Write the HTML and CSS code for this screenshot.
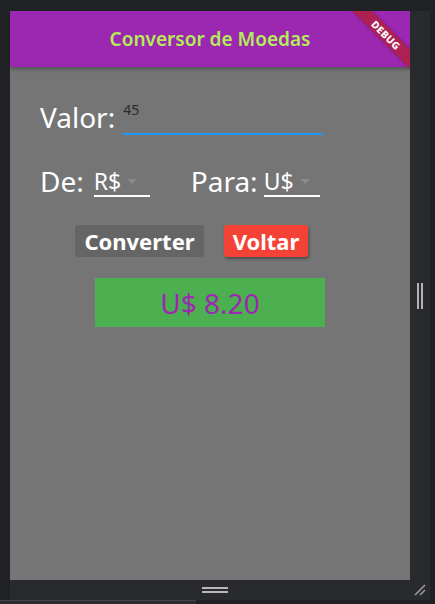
FILE: index.html
```html
<!DOCTYPE html>
<html>
<head>
<meta charset="utf-8">
<link rel="stylesheet" href="styles.css">
</head>
<body>
<div class="screen">
  <div class="main">
    <div class="app">
      <header class="appbar">Conversor de Moedas</header>
      <div class="content">
        <div class="row-valor">
          <span class="label label-valor">Valor:</span>
          <div class="field"><span class="field-text">45</span></div>
        </div>
        <div class="row-moedas">
          <span class="label">De:</span>
          <div class="dropdown dd-de"><span>R$</span><span class="arrow"></span></div>
          <span class="label label-para">Para:</span>
          <div class="dropdown dd-para"><span>U$</span><span class="arrow"></span></div>
        </div>
        <div class="row-buttons">
          <button class="btn btn-convert">Converter</button>
          <button class="btn btn-back">Voltar</button>
        </div>
        <div class="result">U$ 8.20</div>
      </div>
      <div class="debug">DEBUG</div>
    </div>
    <div class="side">
      <span class="vbar"></span><span class="vbar"></span>
    </div>
  </div>
  <div class="bottom">
    <div class="hbars"><span class="hbar"></span><span class="hbar"></span></div>
    <svg class="grip" width="14" height="14" viewBox="0 0 14 14">
      <line x1="2" y1="12" x2="12" y2="2" stroke="#9a9b9e" stroke-width="1.6"/>
      <line x1="7" y1="12" x2="12" y2="7" stroke="#9a9b9e" stroke-width="1.6"/>
    </svg>
  </div>
  <div class="footer"></div>
</div>
</body>
</html>
```
FILE: styles.css
```css
* { box-sizing: border-box; }
html, body {
  margin: 0;
  padding: 0;
  width: 435px;
  height: 604px;
  overflow: hidden;
  background: #202124;
  font-family: "Noto Sans", "Open Sans", sans-serif;
}
.screen {
  display: flex;
  flex-direction: column;
  padding-top: 11px;
  height: 604px;
}
.main {
  display: flex;
  height: 569px;
  padding-left: 10px;
}
.app {
  position: relative;
  width: 400px;
  height: 569px;
  background: #757575;
  overflow: hidden;
  display: flex;
  flex-direction: column;
}
.appbar {
  height: 56px;
  flex: none;
  background: #9c27b0;
  color: #b4ec57;
  font-size: 19px;
  font-weight: 600;
  display: flex;
  align-items: center;
  justify-content: center;
  box-shadow: 0 2px 4px rgba(0,0,0,0.3);
  position: relative;
  z-index: 1;
}
.content {
  padding: 32px 30px 0 30px;
  display: flex;
  flex-direction: column;
}
.label {
  color: #fff;
  font-size: 28px;
  line-height: 32px;
}
.label-valor {
  margin-bottom: 2px;
}
.row-valor {
  display: flex;
  align-items: flex-end;
  height: 36px;
}
.field {
  margin-left: 8px;
  width: 200px;
  height: 32px;
  border-bottom: 2px solid #2196f3;
  position: relative;
}
.field-text {
  position: absolute;
  left: 0;
  top: -3px;
  font-size: 14px;
  color: #2a2a2a;
}
.row-moedas {
  display: flex;
  align-items: flex-end;
  margin-top: 28px;
  height: 34px;
}
.dropdown {
  margin-left: 10px;
  width: 56px;
  height: 31px;
  border-bottom: 2px solid #fff;
  display: flex;
  align-items: center;
  color: #fff;
  font-size: 23px;
  line-height: 28px;
  padding-left: 0;
}
.arrow {
  margin-left: 6px;
  margin-top: 2px;
  width: 0;
  height: 0;
  border-left: 5px solid transparent;
  border-right: 5px solid transparent;
  border-top: 5px solid #8a8a8a;
}
.label-para {
  margin-left: 41px;
}
.dd-para {
  margin-left: 6px;
}
.row-buttons {
  display: flex;
  justify-content: flex-start;
  gap: 20px;
  margin-top: 28px;
  margin-left: 35px;
}
.btn {
  border: none;
  border-radius: 3px;
  height: 32px;
  padding: 0;
  color: #fff;
  font-family: "Noto Sans", "Open Sans", sans-serif;
  font-size: 22px;
  font-weight: 700;
  line-height: 32px;
}
.btn-convert {
  background: #656565;
  width: 129px;
}
.btn-back {
  background: #f44336;
  width: 84px;
  box-shadow: 1px 2px 3px rgba(0,0,0,0.35);
}
.result {
  margin: 21px auto 0 auto;
  width: 230px;
  height: 49px;
  background: #4caf50;
  color: #9c27b0;
  font-size: 28px;
  display: flex;
  align-items: center;
  justify-content: center;
}
.debug {
  position: absolute;
  left: 326px;
  top: 17px;
  width: 100px;
  height: 14px;
  transform: rotate(45deg);
  background: rgba(183, 28, 28, 0.63);
  color: #fff;
  font-size: 10px;
  font-weight: 800;
  letter-spacing: 0.3px;
  line-height: 14px;
  text-align: center;
  z-index: 2;
  box-shadow: 0 0 2px rgba(0,0,0,0.3);
}
.side {
  width: 20px;
  background: #292a2d;
  display: flex;
  justify-content: center;
  align-items: center;
  gap: 2px;
}
.vbar {
  width: 2px;
  height: 26px;
  background: #b4b4b4;
}
.bottom {
  margin-left: 10px;
  width: 420px;
  height: 20px;
  background: #292a2d;
  position: relative;
  display: flex;
  justify-content: center;
  align-items: center;
}
.hbars {
  display: flex;
  flex-direction: column;
  gap: 2px;
  margin-left: -10px;
}
.hbar {
  width: 26px;
  height: 2px;
  background: #b8b8b8;
}
.grip {
  position: absolute;
  right: 3px;
  bottom: 3px;
}
.footer {
  height: 4px;
  width: 196px;
  background: #2c2d30;
  border-top: 1px solid #45464a;
}
```
